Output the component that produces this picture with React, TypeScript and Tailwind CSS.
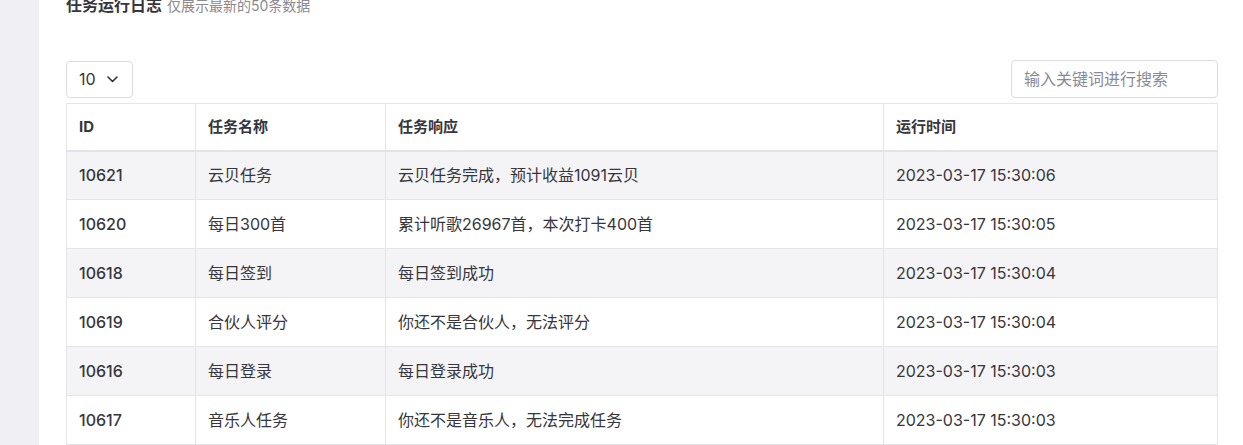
import React from "react";

const rows = [
  { id: "10621", name: "云贝任务", msg: "云贝任务完成，预计收益1091云贝", time: "2023-03-17 15:30:06" },
  { id: "10620", name: "每日300首", msg: "累计听歌26967首，本次打卡400首", time: "2023-03-17 15:30:05" },
  { id: "10618", name: "每日签到", msg: "每日签到成功", time: "2023-03-17 15:30:04" },
  { id: "10619", name: "合伙人评分", msg: "你还不是合伙人，无法评分", time: "2023-03-17 15:30:04" },
  { id: "10616", name: "每日登录", msg: "每日登录成功", time: "2023-03-17 15:30:03" },
  { id: "10617", name: "音乐人任务", msg: "你还不是音乐人，无法完成任务", time: "2023-03-17 15:30:03" },
];

export default function App() {
  return (
    <div
      className="flex h-[445px] w-[1243px] overflow-hidden bg-white text-[#36363c]"
      style={{ fontFamily: 'Inter, "Noto Sans CJK SC", sans-serif' }}
    >
      {/* sidebar edge */}
      <div className="w-[39px] shrink-0 bg-[#f0f0f4]" />

      <div className="flex-1 pl-[27px] pr-[26px]">
        {/* title */}
        <div className="-mt-[7px] flex items-baseline gap-[5px] leading-[24px]">
          <span className="text-[16px] font-bold">任务运行日志</span>
          <span className="text-[14px] text-[#8a8a90]">仅展示最新的50条数据</span>
        </div>

        {/* toolbar */}
        <div className="mt-[42px] flex items-center justify-between">
          <div className="flex h-[37px] w-[67px] items-center justify-between rounded-[4px] border border-[#dcdce4] pl-[12px] pr-[14px] text-[16px]">
            <span>10</span>
            <svg width="11" height="7" viewBox="0 0 11 7" fill="none">
              <path d="M1 1l4.5 4.5L10 1" stroke="#36363c" strokeWidth="1.6" strokeLinecap="round" strokeLinejoin="round" />
            </svg>
          </div>
          <div className="flex h-[38px] w-[207px] items-center rounded-[4px] border border-[#dcdce4] px-[12px] text-[16px] text-[#8a8a94]">
            输入关键词进行搜索
          </div>
        </div>

        {/* table */}
        <table className="mt-[5px] w-[1151px] table-fixed border-collapse">
          <colgroup>
            <col className="w-[129px]" />
            <col className="w-[190px]" />
            <col className="w-[498px]" />
            <col className="w-[334px]" />
          </colgroup>
          <thead>
            <tr className="h-[47px] border-b-2 border-[#e2e2e8]">
              <th className="border border-[#e4e4ea] px-[12px] text-left text-[15px] font-bold">ID</th>
              <th className="border border-[#e4e4ea] px-[12px] text-left text-[15px] font-bold">任务名称</th>
              <th className="border border-[#e4e4ea] px-[12px] text-left text-[15px] font-bold">任务响应</th>
              <th className="border border-[#e4e4ea] px-[12px] text-left text-[15px] font-bold">运行时间</th>
            </tr>
          </thead>
          <tbody>
            {rows.map((r, i) => (
              <tr key={r.id} className={i % 2 === 0 ? "h-[49px] bg-[#f4f4f7]" : "h-[49px] bg-white"}>
                <td className="border border-[#e4e4ea] px-[12px] text-[16px] font-medium">{r.id}</td>
                <td className="border border-[#e4e4ea] px-[12px] text-[16px]">{r.name}</td>
                <td className="border border-[#e4e4ea] px-[12px] text-[16px]">{r.msg}</td>
                <td className="border border-[#e4e4ea] px-[12px] text-[16px]">{r.time}</td>
              </tr>
            ))}
          </tbody>
        </table>
      </div>
    </div>
  );
}
